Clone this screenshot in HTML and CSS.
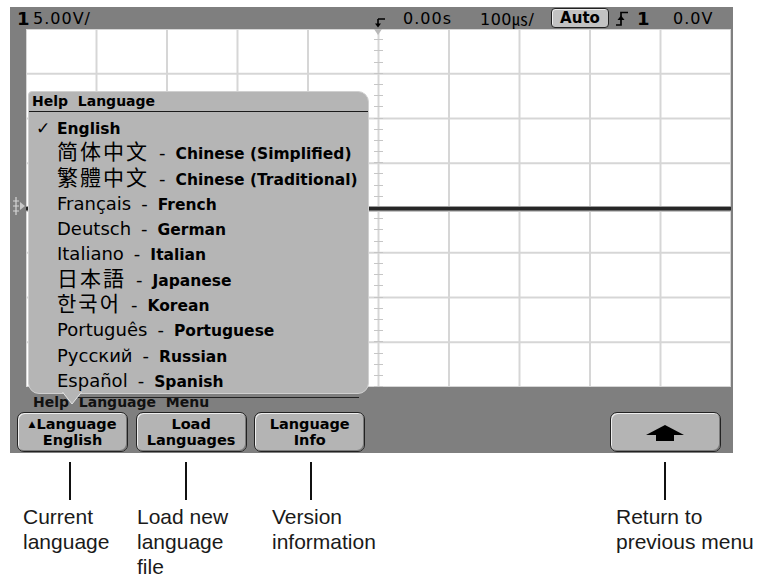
FILE: index.html
```html
<!DOCTYPE html>
<html lang="en">
<head>
    <meta charset="UTF-8">
    <meta name="viewport" content="width=device-width, initial-scale=1.0">
    <title>Help Language Menu</title>
    <link rel="stylesheet" href="styles.css">
</head>
<body>
    <div class="scope">
        <div class="status">
            <span class="ch">1</span>
            <span class="vdiv">5.00V/</span>
            <span class="trig-pos">
                <svg width="10" height="10" viewBox="0 0 10 10">
                    <path d="M3 1 H10 M3 1 V6" stroke="#000" stroke-width="1.6" fill="none"/>
                    <polygon points="0,5.5 6,5.5 3,9.5" fill="#000"/>
                </svg>
            </span>
            <span class="delay">0.00s</span>
            <span class="tdiv">100㎲/</span>
            <span class="mode">Auto</span>
            <span class="edge">
                <svg width="13" height="15" viewBox="0 0 13 15">
                    <path d="M0 14 H5 V1.5 H12" stroke="#000" stroke-width="1.7" fill="none"/>
                    <polygon points="1.5,9 5,4.5 8.5,9" fill="#000"/>
                </svg>
            </span>
            <span class="ch src">1</span>
            <span class="level">0.0V</span>
        </div>

        <div class="main">
            <div class="gutter">
                <svg class="ground" width="14" height="20" viewBox="0 0 14 20">
                    <path d="M5 1 V19 M2 5 H8 M2 10 H8 M2 15 H8" stroke="#d6d6d6" stroke-width="1.2" fill="none"/>
                    <polygon points="9,6 14,10 9,14" fill="#c8c8c8"/>
                </svg>
            </div>
            <div class="grid">
                <div class="trig-mark"></div>
                <div class="axis"></div>
                <div class="trace"></div>
            </div>
        </div>

        <div class="bottom">
            <div class="menu-name">Help&nbsp;&nbsp;Language&nbsp;&nbsp;Menu</div>
            <div class="keys">
                <div class="key"><span><small>▲</small>Language</span><span>English</span></div>
                <div class="key"><span>Load</span><span>Languages</span></div>
                <div class="key"><span>Language</span><span>Info</span></div>
                <div class="key back">
                    <svg width="38" height="16" viewBox="0 0 38 16">
                        <polygon points="19,0 38,10 0,10" fill="#000"/>
                        <rect x="10" y="10" width="18" height="6" fill="#000"/>
                    </svg>
                </div>
            </div>
        </div>

        <!-- popup list over the graticule -->
        <div class="popup">
            <div class="popup-title">Help&nbsp;&nbsp;Language</div>
            <ul class="langs">
                <li><span class="check">✓</span><b>English</b></li>
                <li><span class="cjk sc">简体中文</span><span class="dash">-</span><b>Chinese (Simplified)</b></li>
                <li><span class="cjk tc">繁體中文</span><span class="dash">-</span><b>Chinese (Traditional)</b></li>
                <li>Français<span class="dash">-</span><b>French</b></li>
                <li>Deutsch<span class="dash">-</span><b>German</b></li>
                <li>Italiano<span class="dash">-</span><b>Italian</b></li>
                <li><span class="cjk jp">日本語</span><span class="dash">-</span><b>Japanese</b></li>
                <li><span class="cjk kr">한국어</span><span class="dash">-</span><b>Korean</b></li>
                <li>Português<span class="dash">-</span><b>Portuguese</b></li>
                <li>Русский<span class="dash">-</span><b>Russian</b></li>
                <li>Español<span class="dash">-</span><b>Spanish</b></li>
            </ul>
            <svg class="pointer" width="20" height="13" viewBox="0 0 20 13">
                <polygon points="0,0 20,0 10,12" fill="#b5b5b5"/>
                <path d="M0.5 0 L10 12 L19.5 0" stroke="#e2e2e2" stroke-width="1" fill="none"/>
            </svg>
        </div>
    </div>

    <div class="notes">
        <div class="note n1"><i class="tick"></i><p>Current<br>language</p></div>
        <div class="note n2"><i class="tick"></i><p>Load new<br>language<br>file</p></div>
        <div class="note n3"><i class="tick"></i><p>Version<br>information</p></div>
        <div class="note n4"><i class="tick"></i><p>Return to<br>previous menu</p></div>
    </div>
</body>
</html>
```

FILE: styles.css
```css
body {
    margin: 0;
    background-color: #fff;
    font-family: "DejaVu Sans", sans-serif;
    color: #000;
}
.scope {
    position: relative;
    width: 723px;
    height: 446px;
    margin: 7px 0 0 10px;
    background-color: #7f7f7f;
    display: flex;
    flex-direction: column;
}

/* top status line */
.status {
    height: 22px;
    display: flex;
    align-items: center;
    padding-left: 7px;
    font-size: 16px;
    letter-spacing: 1px;
    white-space: nowrap;
}
.status > span {
    flex: none;
}
.ch {
    width: 16px;
    font-weight: bold;
    font-size: 18px;
    letter-spacing: 0;
}
.vdiv { width: 342px; }
.trig-pos {
    width: 28px;
    height: 22px;
    display: flex;
    align-items: flex-end;
    padding-bottom: 1px;
    box-sizing: border-box;
}
.delay { width: 77px; }
.tdiv {
    width: 71px;
    font-family: "DejaVu Sans", "Noto Sans CJK JP", sans-serif;
    letter-spacing: 0.5px;
}
.mode {
    width: 58px;
    height: 20px;
    box-sizing: border-box;
    margin-right: 7px;
    border: 1px solid #222;
    border-radius: 4px;
    background-color: #c2c2c2;
    box-shadow: inset 1px 1px 0 #eee;
    font-weight: bold;
    font-size: 15px;
    line-height: 18px;
    letter-spacing: 0;
    text-align: center;
}
.edge {
    width: 21px;
    display: flex;
    align-items: center;
}
.src { width: 36px; }

/* graticule */
.main {
    display: flex;
    height: 358px;
}
.gutter {
    width: 16px;
    padding-top: 167px;
    box-sizing: border-box;
}
.ground {
    display: block;
    margin-left: 1px;
}
.grid {
    position: relative;
    width: 705px;
    background-color: #fff;
    background-image:
        linear-gradient(to right, #d6d6d6 2px, transparent 2px),
        linear-gradient(to bottom, #d6d6d6 2px, transparent 2px);
    background-size: 70.5px 100%, 100% 44.75px;
    background-position: -1px 0, 0 -1px;
}
.axis {
    position: absolute;
    left: 348px;
    width: 9px;
    top: 0;
    bottom: 0;
    background: repeating-linear-gradient(to bottom, transparent 0 10.2px, #c6c6c6 10.2px 11.19px);
}
.trig-mark {
    position: absolute;
    top: 0;
    left: 348px;
    border-left: 4px solid transparent;
    border-right: 4px solid transparent;
    border-top: 6px solid #b8b8b8;
}
.trace {
    position: absolute;
    left: 0;
    right: 0;
    top: 177px;
    height: 6px;
    background: linear-gradient(#9c9c9c 0 1px, #262626 1px 4px, #6e6e6e 4px 5px, #c4c4c4 5px);
}

/* softkeys */
.bottom {
    height: 66px;
    padding: 7px 0 1px 7px;
    box-sizing: border-box;
}
.menu-name {
    height: 17px;
    line-height: 17px;
    padding-left: 16px;
    font-weight: bold;
    font-size: 14px;
    color: #111;
}
.keys {
    margin-top: 1px;
    display: grid;
    grid-template-columns: repeat(6, 111px);
    column-gap: 7.6px;
}
.key {
    height: 40px;
    box-sizing: border-box;
    border: 1px solid #222;
    border-radius: 7px;
    background-color: #b4b4b4;
    box-shadow: inset 1px 1px 0 #eee, inset -1px -1px 0 #7a7a7a;
    display: flex;
    flex-direction: column;
    align-items: center;
    justify-content: center;
    font-weight: bold;
    font-size: 14.5px;
    line-height: 16px;
}
.key small {
    font-size: 9px;
    margin-right: 1px;
    vertical-align: 2px;
}
.key.back {
    grid-column: 6;
    padding-top: 1px;
}

/* help language popup */
.popup {
    position: absolute;
    left: 18px;
    top: 84px;
    width: 341px;
    box-sizing: border-box;
    background-color: #b5b5b5;
    border: 1px solid #d0d0d0;
    border-radius: 4px 11px 11px 11px;
}
.popup::before {
    content: "";
    position: absolute;
    left: 39px;
    right: 9px;
    bottom: -5px;
    height: 1px;
    background-color: #222;
}
.popup-title {
    height: 19px;
    line-height: 19px;
    padding-left: 3px;
    font-weight: bold;
    font-size: 14px;
    border-bottom: 1px solid #1a1a1a;
}
.langs {
    list-style: none;
    margin: 0;
    padding: 3px 0 0 28px;
}
.langs li {
    height: 25.3px;
    line-height: 25.3px;
    font-size: 18px;
    white-space: nowrap;
}
.langs b {
    font-size: 15.5px;
}
.check {
    display: inline-block;
    width: 21px;
    margin-left: -21px;
    font-size: 17px;
}
.dash {
    margin: 0 10px;
}
.cjk {
    font-size: 21px;
    line-height: 16px;
    letter-spacing: 2px;
}
.cjk.sc { font-family: "Noto Sans CJK SC", sans-serif; }
.cjk.tc { font-family: "Noto Sans CJK TC", sans-serif; }
.cjk.jp { font-family: "Noto Sans CJK JP", sans-serif; }
.cjk.kr { font-family: "Noto Sans CJK KR", sans-serif; }
.pointer {
    position: absolute;
    left: 33px;
    top: calc(100% - 1px);
}

/* callouts below the screen */
.notes {
    display: grid;
    grid-template-columns: 114px 135px 344px auto;
    padding-left: 23px;
    margin-top: 9px;
}
.tick {
    display: block;
    width: 2px;
    height: 38px;
    background-color: #111;
}
.n1 .tick { margin-left: 46px; }
.n2 .tick { margin-left: 48px; }
.n3 .tick { margin-left: 38px; }
.n4 .tick { margin-left: 48px; }
.note p {
    margin: 4px 0 0;
    font-family: "Liberation Sans", Arial, sans-serif;
    font-size: 21px;
    line-height: 25px;
    color: #1a1a1a;
    white-space: nowrap;
}
```
